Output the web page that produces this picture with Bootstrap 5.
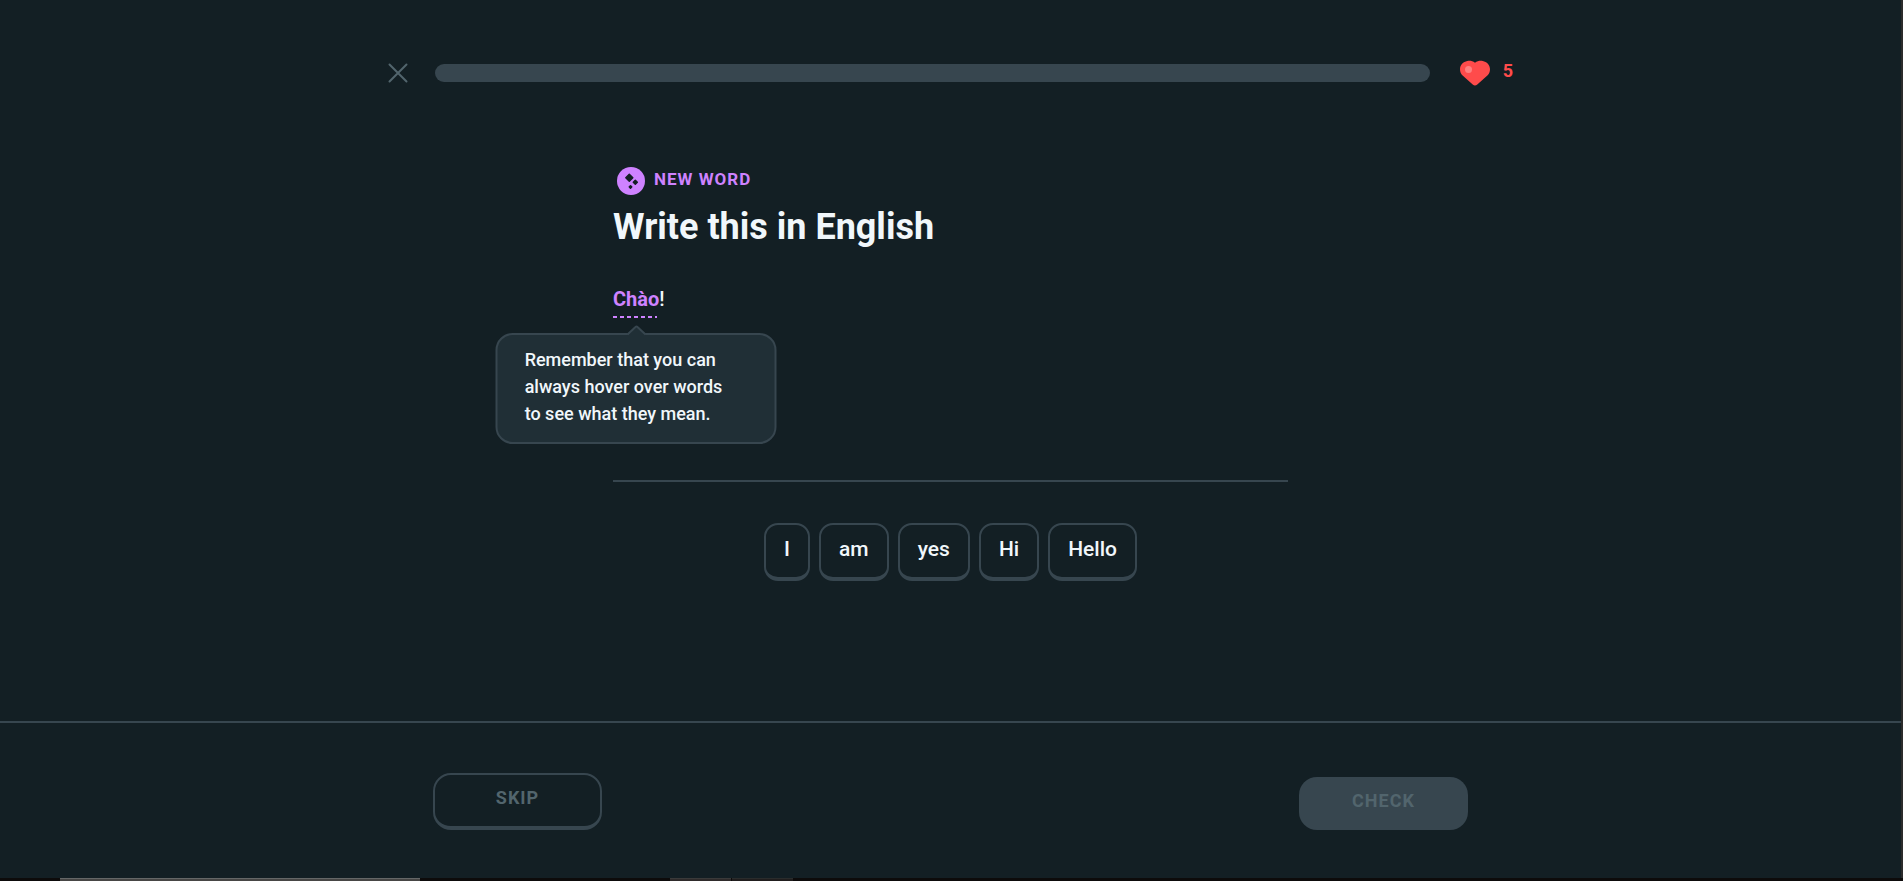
<!DOCTYPE html>
<html lang="en">
<head>
<meta charset="utf-8">
<meta name="viewport" content="width=device-width, initial-scale=1">
<title>Write this in English</title>
<link href="https://cdn.jsdelivr.net/npm/bootstrap@5.3.0/dist/css/bootstrap.min.css" rel="stylesheet">
<style>
  :root { --line: #37464f; --ink: #f1f7fb; --muted: #52656d; --violet: #ce82ff; --heart: #ff4b4b; }
  body { background: #131f24; color: var(--ink); font-family: Roboto, "Liberation Sans", sans-serif; font-size: 18px; line-height: 26px; }
  .lesson { border-right: 2px solid #2b2b2b; }
  .lesson-top { max-width: 1125px; padding-top: 58px; }
  .quit { width: 20px; height: 20px; }
  .lesson-bar { height: 18px; border-radius: 9px; background: var(--line); margin: 0 30px 0 27px; }
  .hearts { color: var(--heart); }
  .hearts svg { margin-right: 13px; }
  .hearts span { padding-bottom: 3px; }
  .challenge { max-width: 675px; padding-top: 80px; }
  .new-word { color: var(--violet); gap: 9px; padding-left: 4px; font-size: 17px; letter-spacing: 1px; height: 28px; }
  .new-word span { padding-bottom: 4px; }
  .challenge h1 { font-size: 36px; line-height: 44px; margin: 10px 0 35px; }
  .prompt { font-size: 20px; line-height: 30px; }
  .hint-word { color: var(--violet); display: inline-block; padding-bottom: 4px; }
  .hint-word::after { content: ""; position: absolute; left: 0; right: 2px; bottom: 0; height: 2px;
    background: repeating-linear-gradient(90deg, var(--violet) 0 4px, transparent 4px 7px); }
  .hint-tip { position: absolute; top: calc(100% + 15px); left: 50%; transform: translateX(-50%); width: 281px;
    padding: 11px 42px 15px 27px; border: 2px solid var(--line); border-radius: 17px; background: #202f36;
    color: var(--ink); font-size: 18px; line-height: 27px; }
  .hint-tip svg { position: absolute; top: -10px; left: 50%; margin-left: -10px; }
  .answer-line { border-bottom: 2px solid var(--line); height: 164px; }
  .bank { gap: 9px; margin-top: 41px; }
  .tile { background: transparent; color: var(--ink); border: 2px solid var(--line); border-bottom-width: 4px;
    border-radius: 14px; height: 58px; padding: 0 18px 5px; font-size: 21px; font-weight: 500; }
  .lesson-foot { border-top: 2px solid var(--line); padding: 50px 0 48px; }
  .foot-inner { max-width: 1035px; }
  .act { width: 169px; border-radius: 18px; font-weight: 700; letter-spacing: 1px; color: var(--muted); padding: 0 0 5px; }
  .act-skip { height: 57px; border: 2px solid var(--line); border-bottom-width: 4px; background: transparent; }
  .act-check { height: 53px; border: 0; background: var(--line); }
  .dock { height: 3px; background: #0d0b0b; }
  .dock i { height: 3px; background: #474645; border-top: 1px solid #656767; }
  .dock .task-a { width: 360px; margin-left: 60px; }
  .dock .task-b { width: 61px; margin-left: 250px; background: #2f2b2b; border-color: #3a3a3a; }
  .dock .task-c { width: 61px; margin-left: 1px; background: #211e1e; border-color: #2a2c2c; }
</style>
</head>
<body>
<div class="min-vh-100 d-flex flex-column">
  <div class="lesson flex-grow-1 d-flex flex-column">
    <header class="lesson-top container-fluid px-0 d-flex align-items-center">
      <button type="button" class="quit btn p-0 border-0 d-flex" aria-label="Quit lesson">
        <svg width="20" height="20" viewBox="0 0 20 20" fill="none" stroke="#52656d" stroke-width="2" stroke-linecap="round"><path d="M1.500 1.500l17 17M18.500 1.500l-17 17"/></svg>
      </button>
      <div class="lesson-bar flex-grow-1" role="progressbar" aria-label="Lesson progress" aria-valuenow="0" aria-valuemin="0" aria-valuemax="100"></div>
      <div class="hearts d-flex align-items-center fw-bold">
        <svg width="30" height="26" viewBox="0 0 30 26" aria-hidden="true"><path fill="#ff4b4b" d="M15 2.800C12.500.700 9.500.500 7.300 1 3.200 1.700 0 5 0 9.200c0 2.600.900 4.600 2.600 6.300l10.100 9a3.400 3.400 0 0 0 4.600 0l10.100-9c1.700-1.700 2.600-3.700 2.600-6.300C30 5 26.800 1.700 22.700 1 20.500.500 17.500.700 15 2.800z"/><circle cx="8.500" cy="9.500" r="3.500" fill="#ff8080"/></svg>
        <span>5</span>
      </div>
    </header>

    <main class="challenge container-fluid px-0 flex-grow-1">
      <div class="new-word d-flex align-items-center fw-bold">
        <svg width="28" height="28" viewBox="0 0 28 28" aria-hidden="true"><circle cx="14" cy="14" r="14" fill="#ce82ff"/><g fill="#131f24" stroke="#131f24" stroke-width="1.500" stroke-linejoin="round"><path d="M12.300 7.300l3.500 3.500-3.500 3.500-3.500-3.500zM18.300 13.200l2 2-2 2-2-2zM13.500 18.700l1.200 1.200-1.200 1.200-1.200-1.200z"/></g></svg>
        <span>NEW WORD</span>
      </div>
      <h1 class="fw-bold">Write this in English</h1>
      <div class="prompt fw-medium"><span class="hint-word position-relative fw-bold">Chào<span class="hint-tip fw-medium" role="tooltip"><svg width="20" height="11" viewBox="0 0 20 11" aria-hidden="true"><path d="M1 10l8-8q1-1 2 0l8 8v1H1z" fill="#202f36"/><path d="M1 9.500l8-7.500q1-1 2 0l8 7.500" fill="none" stroke="#37464f" stroke-width="2"/></svg>Remember that you can always hover over words to see what they mean.</span></span>!</div>
      <div class="answer-line"></div>
      <div class="bank d-flex flex-wrap justify-content-center">
        <button type="button" class="tile">I</button>
        <button type="button" class="tile">am</button>
        <button type="button" class="tile">yes</button>
        <button type="button" class="tile">Hi</button>
        <button type="button" class="tile">Hello</button>
      </div>
    </main>

    <footer class="lesson-foot">
      <div class="foot-inner container-fluid px-0 d-flex justify-content-between align-items-end">
        <button type="button" class="act act-skip">SKIP</button>
        <button type="button" class="act act-check" aria-disabled="true">CHECK</button>
      </div>
    </footer>
  </div>
  <div class="dock d-flex" aria-hidden="true"><i class="task-a"></i><i class="task-b"></i><i class="task-c"></i></div>
</div>
<script src="https://cdn.jsdelivr.net/npm/bootstrap@5.3.0/dist/js/bootstrap.bundle.min.js"></script>
</body>
</html>
